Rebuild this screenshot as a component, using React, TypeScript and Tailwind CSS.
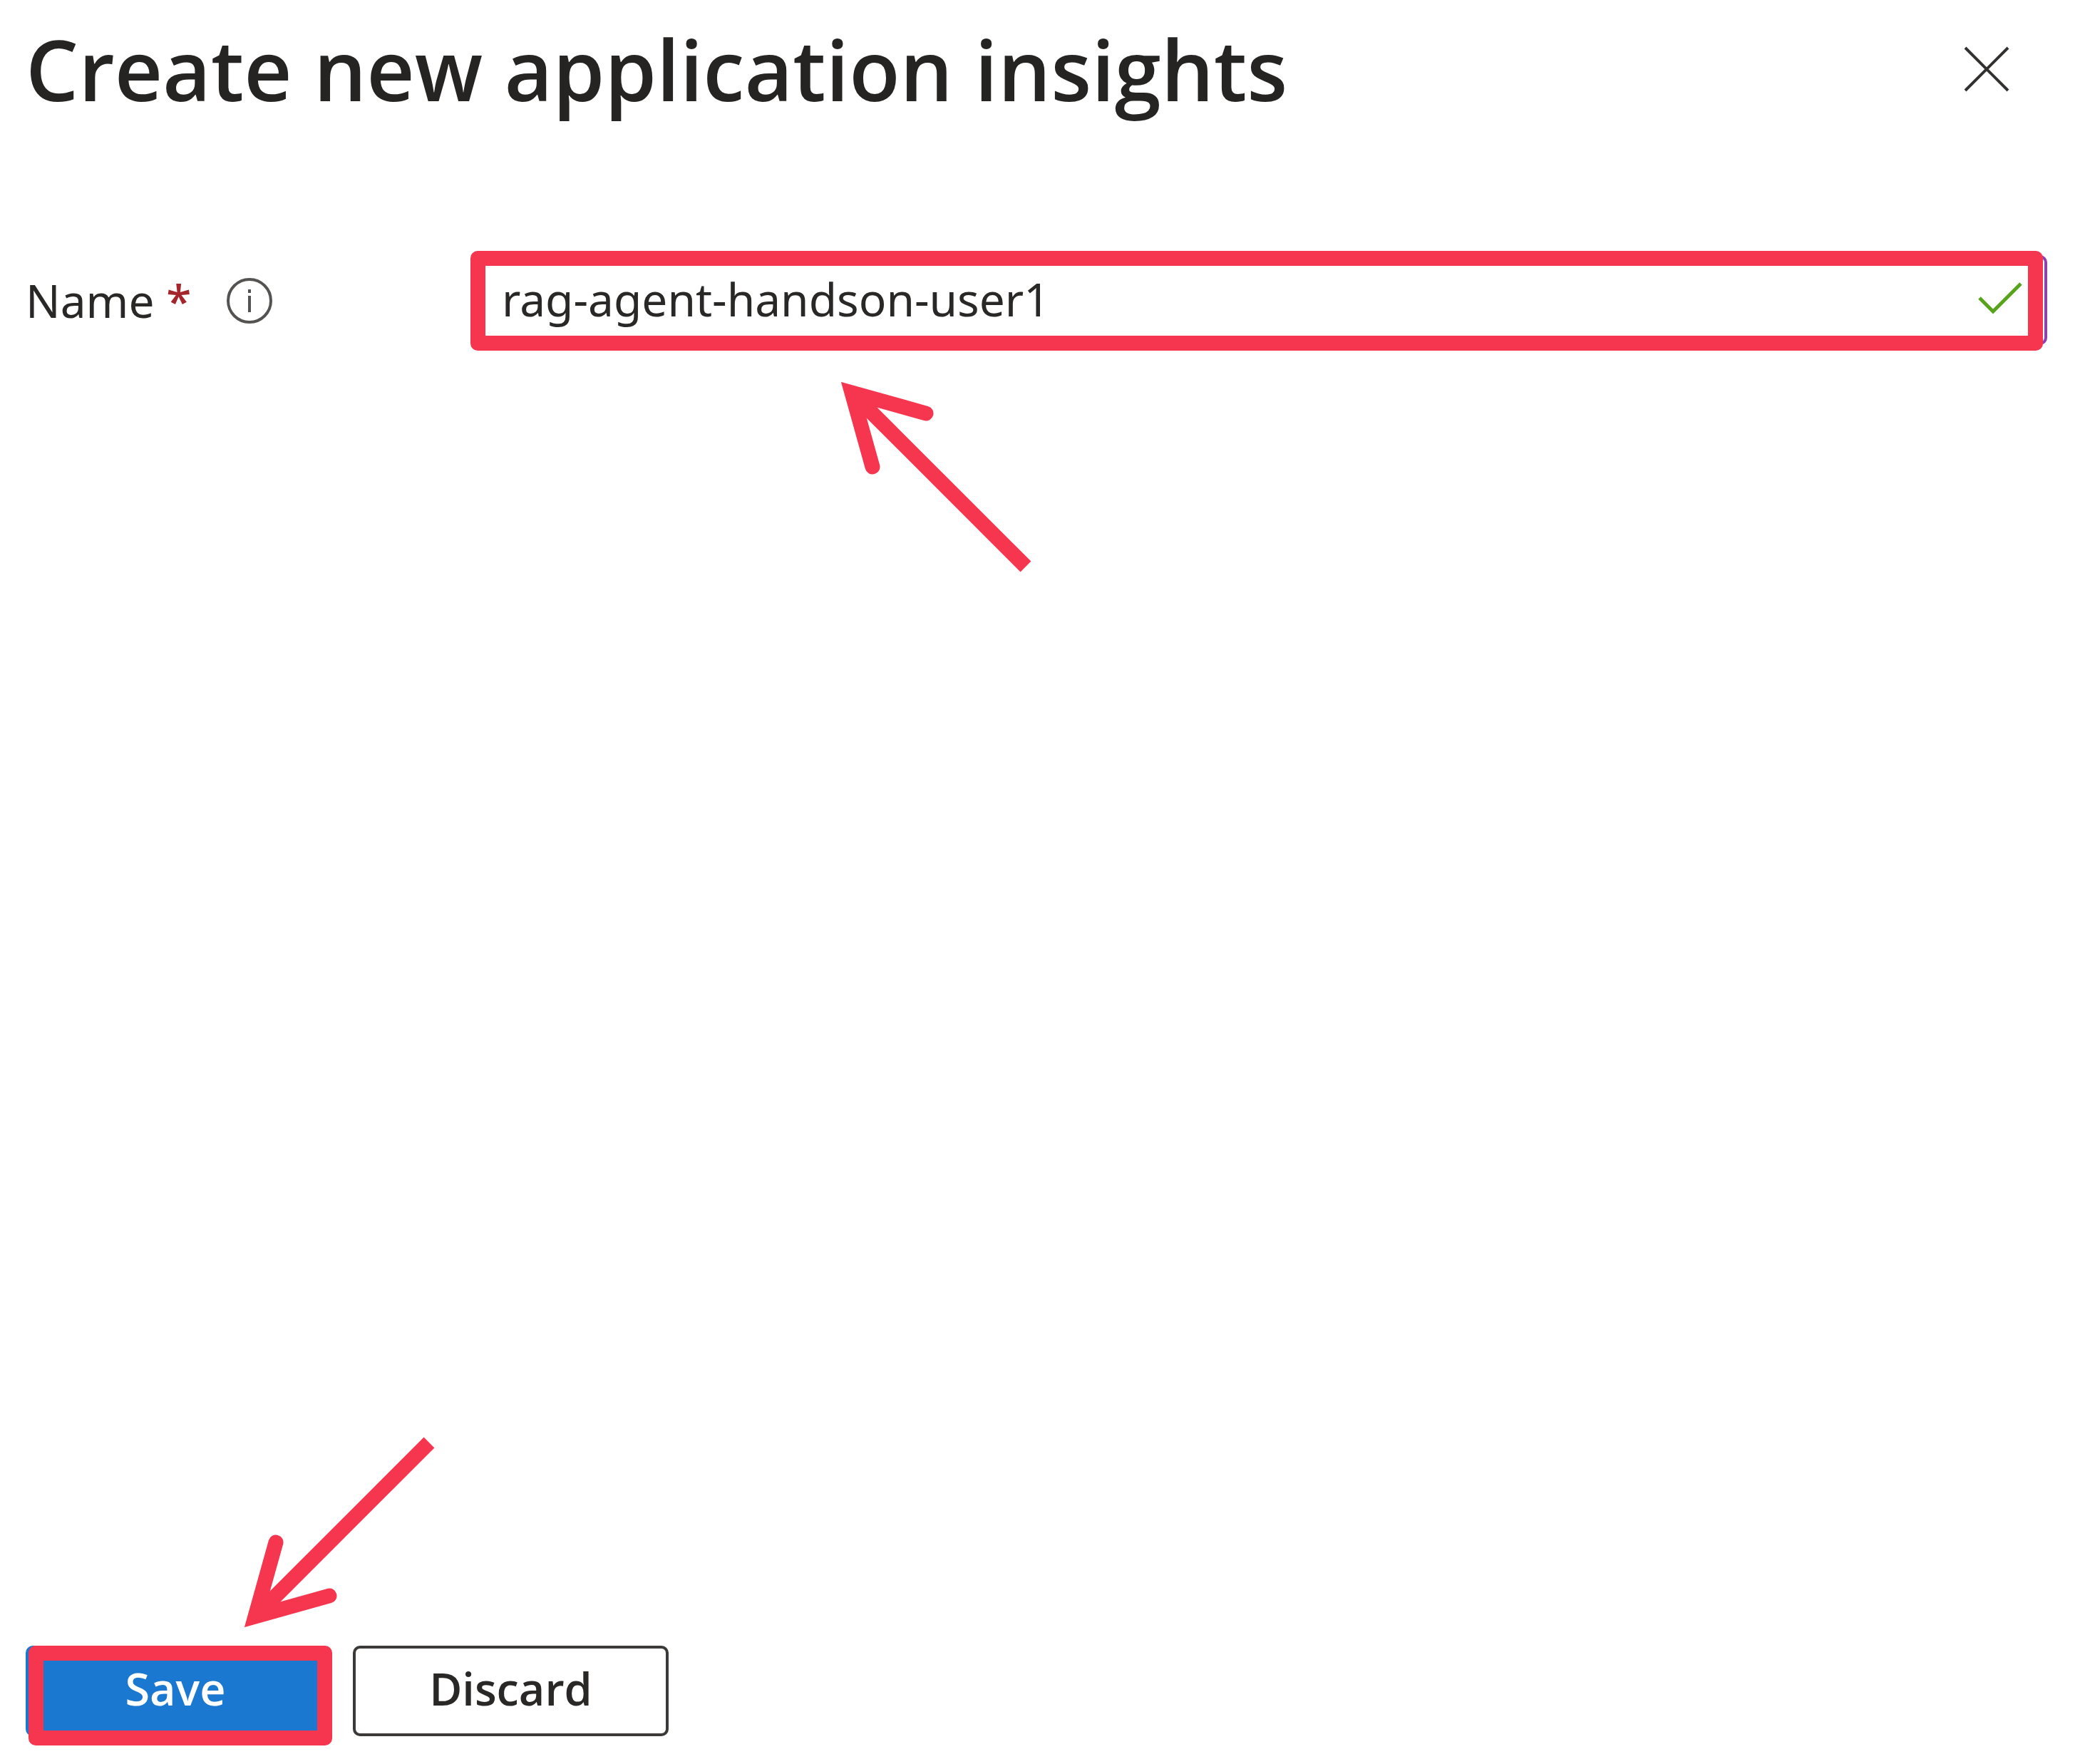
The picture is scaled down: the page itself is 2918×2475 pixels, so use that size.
import { useState } from "react";

function Arrow({ direction, className }: { direction: "up-left" | "down-left"; className: string }) {
  const up = direction === "up-left";
  return (
    <svg
      viewBox="0 0 267 267"
      className={`pointer-events-none absolute size-[267px] ${className}`}
      fill="none"
      stroke="#f5364e"
      strokeWidth="21"
      aria-hidden="true"
    >
      <path strokeLinecap="round" d={up ? "M119 44 15 15 44 119" : "M119 223 15 252 44 148"} />
      <path d={up ? "M15 15 259 259" : "M15 252 259 8"} />
    </svg>
  );
}

function Highlight({ className }: { className: string }) {
  return (
    <div
      className={`pointer-events-none absolute h-[140px] rounded-[10px] border-[21px] border-[#f5364e] ${className}`}
      aria-hidden="true"
    />
  );
}

export default function App() {
  const [name, setName] = useState("rag-agent-handson-user1");

  return (
    <main className="flex min-h-screen flex-col overflow-hidden bg-white pl-9 font-['Noto_Sans','Open_Sans',sans-serif] text-[#292827]">
      <header className="flex items-center justify-between pt-4 pr-[99px]">
        <h1 className="font-['Open_Sans','Noto_Sans',sans-serif] text-[117px] leading-[162px] font-semibold text-[#252423]">
          Create new application insights
        </h1>
        <button type="button" aria-label="Close" className="flex size-[88px] shrink-0 items-center justify-end">
          <svg viewBox="0 0 64 64" className="size-16" fill="none" stroke="#323130" strokeWidth="4" aria-hidden="true">
            <path d="M2 2 62 62M62 2 2 62" />
          </svg>
        </button>
      </header>

      <form className="flex grow flex-col" onSubmit={(e) => e.preventDefault()}>
        <div className="mt-[180px] flex items-center pr-[46px]">
          <div className="flex w-[624px] shrink-0 items-center pt-[2px]">
            <label htmlFor="name" className="text-[64px] leading-[88px]">
              Name <span className="font-medium text-[#a4262c]">*</span>
            </label>
            <button type="button" aria-label="More information" className="ml-[50px]">
              <svg viewBox="0 0 64 64" className="size-16" fill="none" stroke="#555352" strokeWidth="4" aria-hidden="true">
                <circle cx="32" cy="32" r="30" />
                <path d="M32 16v5M32 25v23" />
              </svg>
            </button>
          </div>
          <div className="relative min-w-0 flex-1">
            <input
              id="name"
              type="text"
              required
              value={name}
              onChange={(e) => setName(e.target.value)}
              className="block h-[126px] w-full rounded-[10px] border-4 border-[#8f3fb0] bg-white pr-32 pb-1 pl-10 text-[64px] leading-[88px] outline-none"
            />
            <svg
              viewBox="0 0 64 46"
              className="pointer-events-none absolute top-[38px] right-[34px] h-[46px] w-16"
              fill="none"
              stroke="#57a31c"
              strokeWidth="5"
              aria-hidden="true"
            >
              <path d="M3 22 22 41 61 2" />
            </svg>
            <Highlight className="-top-[6px] right-[6px] left-0" />
            <Arrow direction="up-left" className="top-[178px] left-[520px]" />
          </div>
        </div>

        <div className="mt-auto flex gap-[39px] pb-[39px] font-['Open_Sans','Noto_Sans',sans-serif] text-[63px] leading-[88px] font-semibold">
          <div className="relative">
            <button type="submit" className="block h-[127px] w-[420px] rounded-[10px] bg-[#1a78d0] pb-2 text-white">
              Save
            </button>
            <Highlight className="top-0 left-1 w-[426px]" />
            <Arrow direction="down-left" className="-top-[293px] left-[307px]" />
          </div>
          <button type="button" className="h-[127px] w-[443px] rounded-[10px] border-4 border-[#3b3a39] pb-2">
            Discard
          </button>
        </div>
      </form>
    </main>
  );
}
